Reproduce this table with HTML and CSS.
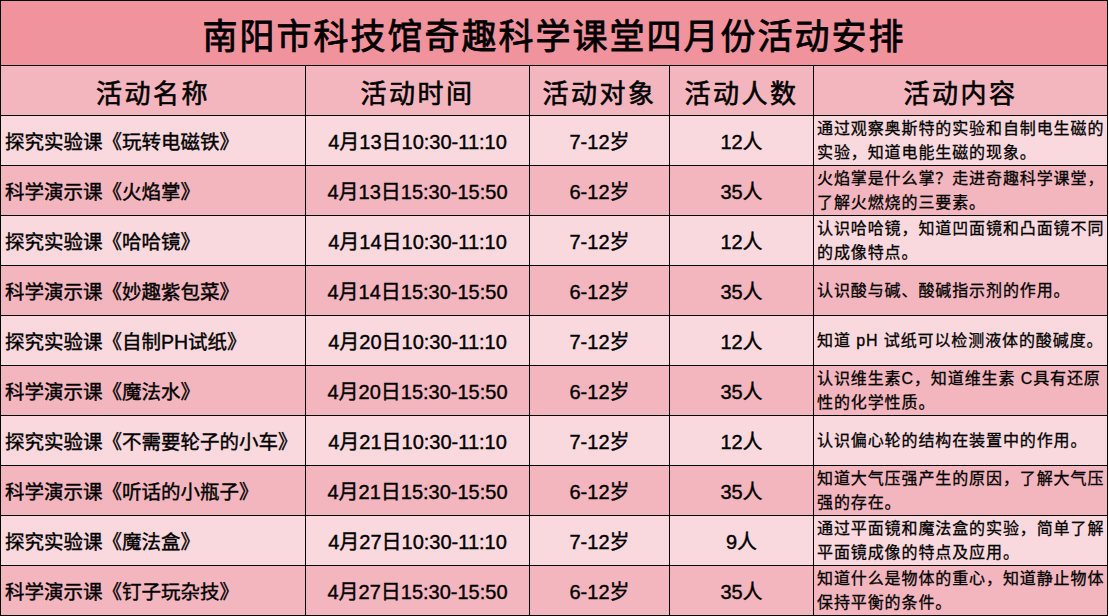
FILE: index.html
```html
<!DOCTYPE html>
<html lang="zh-CN">
<head>
<meta charset="utf-8">
<title>南阳市科技馆奇趣科学课堂四月份活动安排</title>
<link rel="stylesheet" href="styles.css">
</head>
<body>
<div class="sheet">
  <div class="title">南阳市科技馆奇趣科学课堂四月份活动安排</div>

  <div class="head">活动名称</div>
  <div class="head">活动时间</div>
  <div class="head">活动对象</div>
  <div class="head">活动人数</div>
  <div class="head">活动内容</div>

  <div class="cell name light">探究实验课《玩转电磁铁》</div>
  <div class="cell mid light">4月13日10:30-11:10</div>
  <div class="cell mid light">7-12岁</div>
  <div class="cell mid light">12人</div>
  <div class="cell desc light">通过观察奥斯特的实验和自制电生磁的<br>实验，知道电能生磁的现象。</div>

  <div class="cell name dark">科学演示课《火焰掌》</div>
  <div class="cell mid dark">4月13日15:30-15:50</div>
  <div class="cell mid dark">6-12岁</div>
  <div class="cell mid dark">35人</div>
  <div class="cell desc dark">火焰掌是什么掌？走进奇趣科学课堂，<br>了解火燃烧的三要素。</div>

  <div class="cell name light">探究实验课《哈哈镜》</div>
  <div class="cell mid light">4月14日10:30-11:10</div>
  <div class="cell mid light">7-12岁</div>
  <div class="cell mid light">12人</div>
  <div class="cell desc light">认识哈哈镜，知道凹面镜和凸面镜不同<br>的成像特点。</div>

  <div class="cell name dark">科学演示课《妙趣紫包菜》</div>
  <div class="cell mid dark">4月14日15:30-15:50</div>
  <div class="cell mid dark">6-12岁</div>
  <div class="cell mid dark">35人</div>
  <div class="cell desc dark">认识酸与碱、酸碱指示剂的作用。</div>

  <div class="cell name light">探究实验课《自制PH试纸》</div>
  <div class="cell mid light">4月20日10:30-11:10</div>
  <div class="cell mid light">7-12岁</div>
  <div class="cell mid light">12人</div>
  <div class="cell desc light">知道 pH 试纸可以检测液体的酸碱度。</div>

  <div class="cell name dark">科学演示课《魔法水》</div>
  <div class="cell mid dark">4月20日15:30-15:50</div>
  <div class="cell mid dark">6-12岁</div>
  <div class="cell mid dark">35人</div>
  <div class="cell desc dark">认识维生素C，知道维生素 C具有还原<br>性的化学性质。</div>

  <div class="cell name light">探究实验课《不需要轮子的小车》</div>
  <div class="cell mid light">4月21日10:30-11:10</div>
  <div class="cell mid light">7-12岁</div>
  <div class="cell mid light">12人</div>
  <div class="cell desc light">认识偏心轮的结构在装置中的作用。</div>

  <div class="cell name dark">科学演示课《听话的小瓶子》</div>
  <div class="cell mid dark">4月21日15:30-15:50</div>
  <div class="cell mid dark">6-12岁</div>
  <div class="cell mid dark">35人</div>
  <div class="cell desc dark">知道大气压强产生的原因，了解大气压<br>强的存在。</div>

  <div class="cell name light">探究实验课《魔法盒》</div>
  <div class="cell mid light">4月27日10:30-11:10</div>
  <div class="cell mid light">7-12岁</div>
  <div class="cell mid light">9人</div>
  <div class="cell desc light">通过平面镜和魔法盒的实验，简单了解<br>平面镜成像的特点及应用。</div>

  <div class="cell name dark">科学演示课《钉子玩杂技》</div>
  <div class="cell mid dark">4月27日15:30-15:50</div>
  <div class="cell mid dark">6-12岁</div>
  <div class="cell mid dark">35人</div>
  <div class="cell desc dark">知道什么是物体的重心，知道静止物体<br>保持平衡的条件。</div>
</div>
</body>
</html>
```

FILE: styles.css
```css
html, body {
  margin: 0;
  padding: 0;
  background: #ffffff;
}

body {
  font-family: "Liberation Sans", "Noto Sans CJK SC", sans-serif;
  color: #000000;
}

.sheet {
  display: grid;
  grid-template-columns: 304px 223px 139px 143px 293px;
  grid-template-rows: 64px 49px repeat(10, 49px);
  gap: 1px;
  padding: 1px;
  width: 1106px;
  background: #000000;
}

.title {
  grid-column: 1 / -1;
  background: #f0939d;
  display: flex;
  align-items: center;
  justify-content: center;
  font-size: 35px;
  font-weight: normal;
  letter-spacing: 2px;
  -webkit-text-stroke: 0.8px #000000;
  padding-top: 1px;
}

.head {
  background: #f4b6be;
  display: flex;
  align-items: center;
  justify-content: center;
  font-size: 26px;
  font-weight: normal;
  letter-spacing: 2.5px;
  -webkit-text-stroke: 0.6px #000000;
  padding-top: 2px;
}

.cell {
  display: flex;
  align-items: center;
  font-size: 20px;
  font-weight: normal;
  -webkit-text-stroke: 0.4px #000000;
}

.light {
  background: #fad9de;
}

.dark {
  background: #f4b6be;
}

.name {
  padding-left: 4px;
  font-size: 19.5px;
}

.mid {
  justify-content: center;
}

.desc {
  display: block;
  align-content: center;
  font-size: 16px;
  letter-spacing: 0.9px;
  line-height: 24px;
  -webkit-text-stroke: 0.3px #000000;
  padding: 0 1px 0 3px;
}
```
